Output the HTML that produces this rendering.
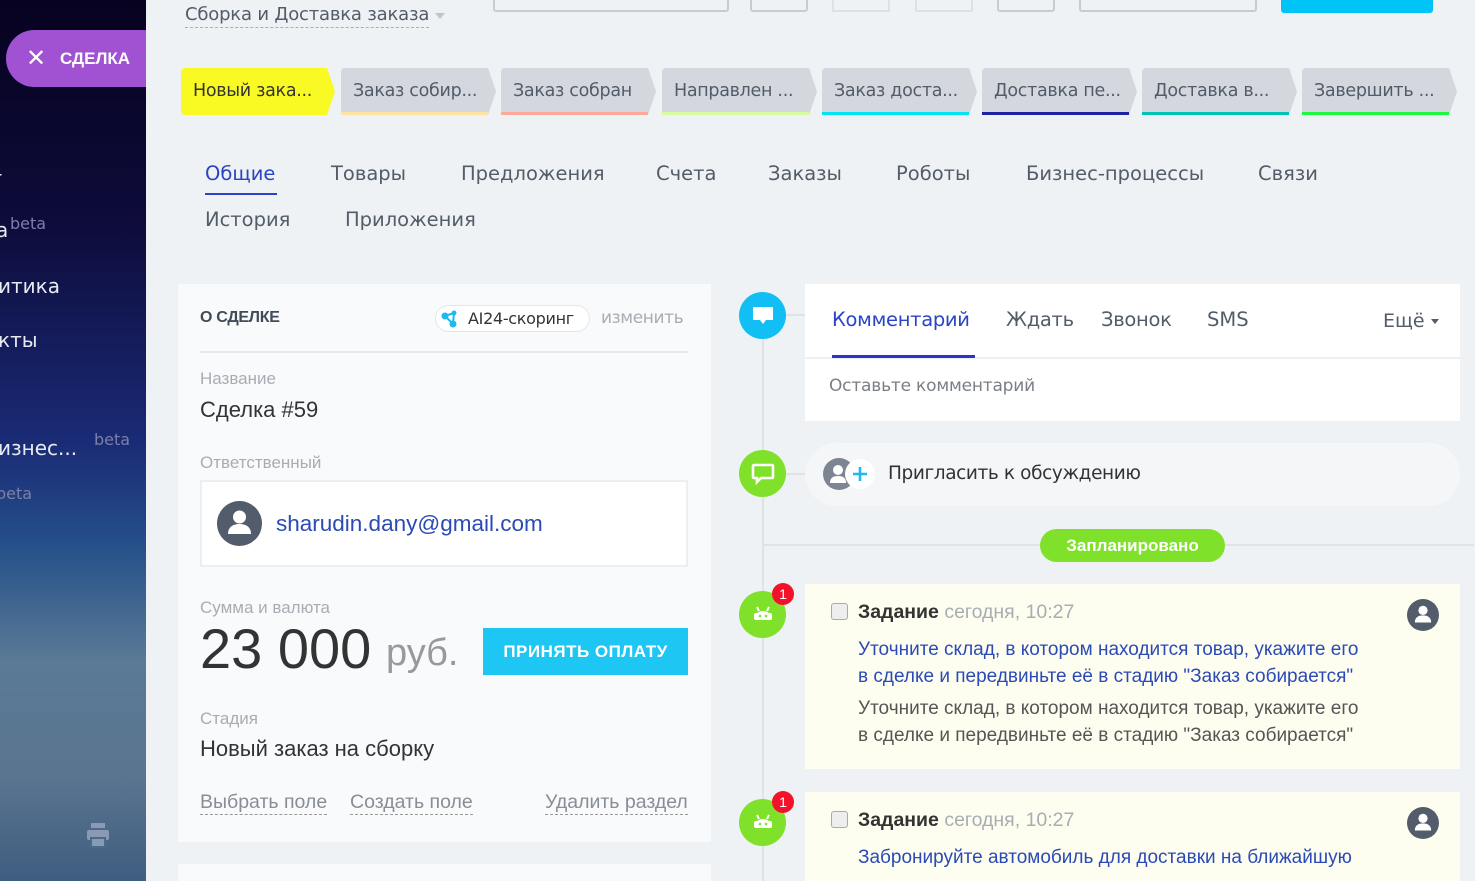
<!DOCTYPE html>
<html><head><meta charset="utf-8">
<style>
*{box-sizing:border-box;margin:0;padding:0}
html,body{width:1475px;height:881px;overflow:hidden}
body{background:#eef2f4;font-family:"Liberation Sans","DejaVu Sans",sans-serif;position:relative;color:#333}
.abs{position:absolute}
#side{left:0;top:0;width:146px;height:881px;background:linear-gradient(180deg,#07021f 0%,#0d0b3a 25%,#1a2a75 50%,#25508a 62%,#5a7a95 75%,#5a7590 88%,#3f5d80 100%);overflow:hidden}
#side .t{position:absolute;color:#e8eaf2;font-size:20px;font-family:"DejaVu Sans",sans-serif}
#side .b{position:absolute;color:#7a80a8;font-size:16px;font-family:"DejaVu Sans",sans-serif}
.pill{left:6px;top:30px;width:140px;height:57px;background:#a052d3;border-radius:29px 0 0 29px;color:#fff;font-weight:bold;font-size:17px}
.stage{position:absolute;top:68px;height:47px;background:#d4d7de;color:#525c69;font-size:17.5px;line-height:47px;padding-left:12px;font-family:"DejaVu Sans",sans-serif;clip-path:polygon(0 0,calc(100% - 8px) 0,100% 50%,calc(100% - 8px) 100%,0 100%);border-radius:4px 0 0 4px;white-space:nowrap;letter-spacing:-.3px}
.stage i{position:absolute;left:0;right:8px;bottom:0;height:3px}
.tab{position:absolute;font-size:19.5px;color:#535c69;font-family:"DejaVu Sans",sans-serif}
.card{background:#f8fafb}
.lbl{color:#a8adb4;font-size:17px}
.dot{position:absolute;left:739px;width:47px;height:47px;border-radius:50%}
.task{background:#fefef0}
.rt{position:absolute;font-size:19.5px;color:#535c69;font-family:"DejaVu Sans",sans-serif}
</style></head><body>
<div id="side" class="abs">
 <div class="t" style="left:-8px;top:166px">г</div>
 <div class="t" style="left:-4px;top:218px">а</div><div class="b" style="left:10px;top:214px">beta</div>
 <div class="t" style="left:-2px;top:274px">итика</div>
 <div class="t" style="left:-2px;top:328px">кты</div>
 <div class="t" style="left:-2px;top:436px">изнес...</div><div class="b" style="left:94px;top:430px">beta</div>
 <div class="b" style="left:-4px;top:484px">beta</div>
 <svg class="abs" style="left:86px;top:823px" width="24" height="26" viewBox="0 0 24 26"><rect x="5" y="0" width="14" height="5" fill="#8a9ab5"/><rect x="1" y="7" width="22" height="10" rx="2" fill="#8a9ab5"/><rect x="5" y="15" width="14" height="9" fill="#8a9ab5" stroke="#4a6a8a" stroke-width="2"/></svg>
</div>
<div class="abs pill"><span class="abs" style="left:20px;top:14px;font-size:24px;font-weight:normal">✕</span><span class="abs" style="left:54px;top:19px">СДЕЛКА</span></div>
<div class="abs" style="left:185px;top:4px;font-size:18px;color:#535c69;font-family:'DejaVu Sans',sans-serif;border-bottom:1px dashed #aab;padding-bottom:2px;letter-spacing:-.2px">Сборка и Доставка заказа</div>
<div class="abs" style="left:435px;top:13px;border:5px solid transparent;border-top:6px solid #c0c5cc"></div>
<div class="abs" style="left:493px;top:-4px;width:236px;height:16px;border:2px solid #c8ccd2;border-top:0;border-radius:0 0 3px 3px"></div>
<div class="abs" style="left:750px;top:-4px;width:58px;height:16px;border:2px solid #c8ccd2;border-top:0;border-radius:0 0 3px 3px"></div>
<div class="abs" style="left:832px;top:-4px;width:58px;height:16px;border:2px solid #dde1e5;border-top:0"></div>
<div class="abs" style="left:915px;top:-4px;width:58px;height:16px;border:2px solid #dde1e5;border-top:0"></div>
<div class="abs" style="left:997px;top:-4px;width:58px;height:16px;border:2px solid #c8ccd2;border-top:0;border-radius:0 0 3px 3px"></div>
<div class="abs" style="left:1079px;top:-4px;width:178px;height:16px;border:2px solid #c8ccd2;border-top:0;border-radius:0 0 3px 3px"></div>
<div class="abs" style="left:1281px;top:0;width:152px;height:13px;background:#00c4f5;border-radius:0 0 3px 3px"></div>

<div class="stage" style="left:181px;width:154px;background:#f9f924;color:#333">Новый зака...</div>
<div class="stage" style="left:341px;width:155px">Заказ собир...<i style="background:#fde2a0"></i></div>
<div class="stage" style="left:501px;width:155px">Заказ собран<i style="background:#ffa99a"></i></div>
<div class="stage" style="left:662px;width:155px">Направлен ...<i style="background:#d6fba0"></i></div>
<div class="stage" style="left:822px;width:155px">Заказ доста...<i style="background:#00e5ef"></i></div>
<div class="stage" style="left:982px;width:155px">Доставка пе...<i style="background:#1e22a0"></i></div>
<div class="stage" style="left:1142px;width:155px">Доставка в...<i style="background:#00c4b4"></i></div>
<div class="stage" style="left:1302px;width:155px">Завершить ...<i style="background:#1df740"></i></div>

<div class="tab" style="left:205px;top:162px;color:#2b44c7">Общие</div>
<div class="abs" style="left:205px;top:193px;width:72px;height:2px;background:#2b44c7"></div>
<div class="tab" style="left:331px;top:162px">Товары</div>
<div class="tab" style="left:461px;top:162px">Предложения</div>
<div class="tab" style="left:656px;top:162px">Счета</div>
<div class="tab" style="left:768px;top:162px">Заказы</div>
<div class="tab" style="left:896px;top:162px">Роботы</div>
<div class="tab" style="left:1026px;top:162px">Бизнес-процессы</div>
<div class="tab" style="left:1258px;top:162px">Связи</div>
<div class="tab" style="left:205px;top:208px">История</div>
<div class="tab" style="left:345px;top:208px">Приложения</div>

<div class="abs card" style="left:178px;top:284px;width:533px;height:558px"></div>
<div class="abs card" style="left:178px;top:864px;width:533px;height:20px"></div>
<div class="abs" style="left:200px;top:309px;font-size:16px;font-weight:bold;color:#424b58;letter-spacing:-.3px">О СДЕЛКЕ</div>
<div class="abs" style="left:435px;top:305px;width:155px;height:27px;border:1px solid #e3e7ea;border-radius:14px;background:#fff"></div>
<svg class="abs" style="left:441px;top:310px" width="18" height="18" viewBox="0 0 18 18"><circle cx="4" cy="6" r="3.5" fill="#1fb8f0"/><circle cx="13" cy="3" r="2.5" fill="#1fb8f0"/><circle cx="12" cy="14" r="3.5" fill="#1fb8f0"/><path d="M4 6L13 3M4 6L12 14M13 3L12 14" stroke="#1fb8f0" stroke-width="2"/></svg>
<div class="abs" style="left:468px;top:309px;font-size:16px;color:#333;font-family:'DejaVu Sans',sans-serif;letter-spacing:-.3px">AI24-скоринг</div>
<div class="abs" style="left:601px;top:308px;font-size:17px;color:#a8adb4;font-family:'DejaVu Sans',sans-serif;letter-spacing:-.4px">изменить</div>
<div class="abs" style="left:200px;top:351px;width:488px;height:2px;background:#e6eaec"></div>
<div class="abs lbl" style="left:200px;top:369px">Название</div>
<div class="abs" style="left:200px;top:397px;font-size:22px;color:#333">Сделка #59</div>
<div class="abs lbl" style="left:200px;top:453px">Ответственный</div>
<div class="abs" style="left:200px;top:480px;width:488px;height:87px;border:2px solid #eceff1;background:#fff"></div>
<svg class="abs" style="left:217px;top:501px" width="45" height="45" viewBox="0 0 45 45"><circle cx="22.5" cy="22.5" r="22.5" fill="#535c6b"/><circle cx="22.5" cy="16" r="6.5" fill="#fff"/><path d="M11 33c0-7 5-10 11.5-10S34 26 34 33z" fill="#fff"/></svg>
<div class="abs" style="left:276px;top:511px;font-size:22.5px;color:#2b4ab5">sharudin.dany@gmail.com</div>
<div class="abs lbl" style="left:200px;top:598px">Сумма и валюта</div>
<div class="abs" style="left:200px;top:616px;font-size:56px;color:#333">23 000</div>
<div class="abs" style="left:386px;top:632px;font-size:38px;color:#999">руб.</div>
<div class="abs" style="left:483px;top:628px;width:205px;height:47px;background:#1ec6f3;color:#fff;font-weight:bold;font-size:17px;text-align:center;line-height:47px;letter-spacing:.5px">ПРИНЯТЬ ОПЛАТУ</div>
<div class="abs lbl" style="left:200px;top:709px">Стадия</div>
<div class="abs" style="left:200px;top:736px;font-size:22px;color:#333">Новый заказ на сборку</div>
<div class="abs" style="left:200px;top:791px;font-size:19.5px;color:#888e96;border-bottom:1px dashed #999">Выбрать поле</div>
<div class="abs" style="left:350px;top:791px;font-size:19.5px;color:#888e96;border-bottom:1px dashed #999">Создать поле</div>
<div class="abs" style="left:545px;top:791px;font-size:19.5px;color:#888e96;border-bottom:1px dashed #999">Удалить раздел</div>

<div class="abs" style="left:762px;top:315px;width:2px;height:570px;background:#dfe3e6"></div>
<div class="abs" style="left:762px;top:544px;width:712px;height:2px;background:#dfe3e6"></div>
<div class="abs" style="left:786px;top:314px;width:20px;height:2px;background:#dfe3e6"></div>
<div class="abs" style="left:786px;top:473px;width:20px;height:2px;background:#dfe3e6"></div>
<div class="dot" style="top:292px;background:#12bff5"></div>
<svg class="abs" style="left:752px;top:306px" width="22" height="20" viewBox="0 0 22 20"><path d="M1 1h20v13h-7l-3 4-3-4H1z" fill="#fff"/></svg>
<div class="dot" style="top:450px;background:#7fe12a"></div>
<svg class="abs" style="left:751px;top:463px" width="24" height="22" viewBox="0 0 24 22"><path d="M3 2h18a1 1 0 011 1v11a1 1 0 01-1 1H10l-4 4v-4H3a1 1 0 01-1-1V3a1 1 0 011-1z" fill="none" stroke="#fff" stroke-width="2.6"/></svg>
<div class="dot" style="top:591px;background:#7fe12a"></div>
<div class="dot" style="top:799px;background:#7fe12a"></div>
<svg class="abs" style="left:752px;top:605px" width="22" height="16" viewBox="0 0 22 16"><rect x="2" y="8" width="18" height="7" rx="2" fill="#fff"/><path d="M3 13a8 7 0 0116 0z" fill="#fff"/><path d="M5 2l2 4M17 2l-2 4" stroke="#fff" stroke-width="2"/><circle cx="8" cy="11" r="1.3" fill="#7fe12a"/><circle cx="14" cy="11" r="1.3" fill="#7fe12a"/></svg>
<svg class="abs" style="left:752px;top:813px" width="22" height="16" viewBox="0 0 22 16"><rect x="2" y="8" width="18" height="7" rx="2" fill="#fff"/><path d="M3 13a8 7 0 0116 0z" fill="#fff"/><path d="M5 2l2 4M17 2l-2 4" stroke="#fff" stroke-width="2"/><circle cx="8" cy="11" r="1.3" fill="#7fe12a"/><circle cx="14" cy="11" r="1.3" fill="#7fe12a"/></svg>
<div class="abs" style="left:772px;top:583px;width:22px;height:22px;border-radius:50%;background:#f0132a;color:#fff;font-size:14px;text-align:center;line-height:22px">1</div>
<div class="abs" style="left:772px;top:791px;width:22px;height:22px;border-radius:50%;background:#f0132a;color:#fff;font-size:14px;text-align:center;line-height:22px">1</div>

<div class="abs" style="left:805px;top:284px;width:655px;height:137px;background:#fff"></div>
<div class="abs" style="left:805px;top:357px;width:655px;height:2px;background:#edf0f2"></div>
<div class="rt" style="left:832px;top:308px;color:#2b44c7;letter-spacing:-.3px">Комментарий</div>
<div class="abs" style="left:832px;top:355px;width:143px;height:3px;background:#2f34c8"></div>
<div class="rt" style="left:1006px;top:308px;letter-spacing:-.3px">Ждать</div>
<div class="rt" style="left:1101px;top:308px;letter-spacing:-.3px">Звонок</div>
<div class="rt" style="left:1207px;top:308px">SMS</div>
<div class="abs" style="left:1383px;top:310px;font-size:19px;color:#535c69;font-family:'DejaVu Sans',sans-serif">Ещё</div>
<div class="abs" style="left:1431px;top:319px;border:4px solid transparent;border-top:5px solid #535c69"></div>
<div class="abs" style="left:829px;top:376px;font-size:17px;color:#7a7f86;font-family:'DejaVu Sans',sans-serif;letter-spacing:-.2px">Оставьте комментарий</div>

<div class="abs" style="left:805px;top:443px;width:655px;height:63px;background:#f4f6f8;border-radius:32px"></div>
<svg class="abs" style="left:822px;top:457px" width="58" height="34" viewBox="0 0 58 34"><circle cx="17" cy="17" r="16" fill="#7d8592"/><circle cx="16" cy="13" r="5" fill="#fff"/><path d="M8 26c0-5 3-7 8-7s8 2 8 7z" fill="#fff"/><circle cx="38" cy="17" r="15" fill="#fff"/><path d="M38 10v14M31 17h14" stroke="#1fb8f0" stroke-width="2.6"/></svg>
<div class="abs" style="left:888px;top:463px;font-size:18.5px;color:#333;font-family:'DejaVu Sans',sans-serif;letter-spacing:-.4px">Пригласить к обсуждению</div>

<div class="abs" style="left:1040px;top:529px;width:185px;height:33px;border-radius:17px;background:#7fe12a;color:#fff;font-weight:bold;font-size:17px;text-align:center;line-height:33px">Запланировано</div>

<div class="abs task" style="left:805px;top:584px;width:655px;height:185px"></div>
<div class="abs task" style="left:805px;top:792px;width:655px;height:95px"></div>
<div class="abs" style="left:831px;top:603px;width:17px;height:17px;border:1px solid #aaa;border-radius:3px;background:#eee"></div>
<div class="abs" style="left:831px;top:811px;width:17px;height:17px;border:1px solid #aaa;border-radius:3px;background:#eee"></div>
<div class="abs" style="left:858px;top:601px;font-size:19.5px"><b style="color:#333">Задание</b> <span style="color:#a8adb4">сегодня, 10:27</span></div>
<div class="abs" style="left:858px;top:809px;font-size:19.5px"><b style="color:#333">Задание</b> <span style="color:#a8adb4">сегодня, 10:27</span></div>
<div class="abs" style="left:858px;top:636px;font-size:19px;line-height:27px;color:#2b4ab5;width:515px">Уточните склад, в котором находится товар, укажите его в сделке и передвиньте её в стадию "Заказ собирается"</div>
<div class="abs" style="left:858px;top:695px;font-size:19px;line-height:27px;color:#555;width:515px">Уточните склад, в котором находится товар, укажите его в сделке и передвиньте её в стадию "Заказ собирается"</div>
<div class="abs" style="left:858px;top:844px;font-size:19px;line-height:27px;color:#2b4ab5;width:560px;white-space:nowrap">Забронируйте автомобиль для доставки на ближайшую</div>
<svg class="abs" style="left:1407px;top:599px" width="32" height="32" viewBox="0 0 45 45"><circle cx="22.5" cy="22.5" r="22.5" fill="#535c6b"/><circle cx="22.5" cy="16" r="6.5" fill="#fff"/><path d="M11 33c0-7 5-10 11.5-10S34 26 34 33z" fill="#fff"/></svg>
<svg class="abs" style="left:1407px;top:807px" width="32" height="32" viewBox="0 0 45 45"><circle cx="22.5" cy="22.5" r="22.5" fill="#535c6b"/><circle cx="22.5" cy="16" r="6.5" fill="#fff"/><path d="M11 33c0-7 5-10 11.5-10S34 26 34 33z" fill="#fff"/></svg>
</body></html>
